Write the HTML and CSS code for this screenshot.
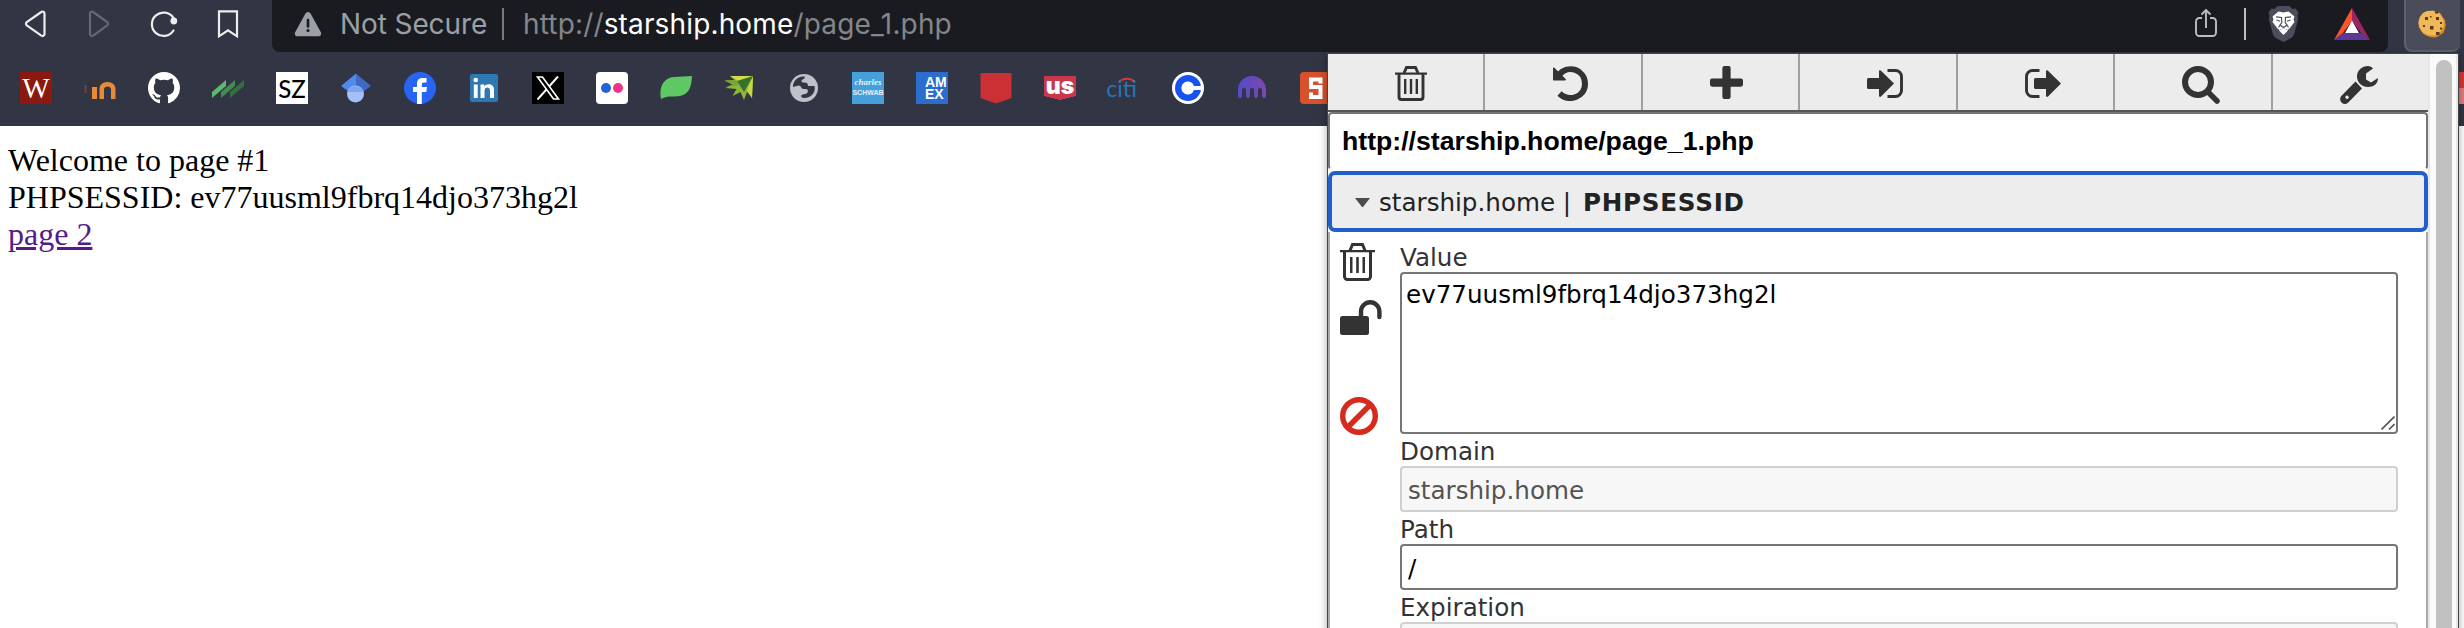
FILE: index.html
```html
<!DOCTYPE html>
<html lang="en">
<head>
<meta charset="utf-8">
<title>page_1.php</title>
<link rel="stylesheet" href="styles.css">
</head>
<body>
<div class="browser">
  <header class="navbar">
    <div class="nav-buttons">
      <svg class="nav-icon" viewBox="0 0 32 32"><path d="M24.500 5.500v20.500c0 1.800-1.900 2.600-3.200 1.500L6.800 17.400a2.100 2.100 0 0 1 0-3.300L21.300 4c1.300-1 3.200-.3 3.200 1.500Z" fill="none" stroke="#eee" stroke-width="2.200"/></svg>
      <svg class="nav-icon" viewBox="0 0 32 32"><path d="M6 5.500v20.500c0 1.800 1.900 2.600 3.200 1.500l14-10.100a2.100 2.100 0 0 0 0-3.300L9.200 4C7.900 3 6 3.700 6 5.500Z" fill="none" stroke="#666975" stroke-width="2.200"/></svg>
      <svg class="nav-icon" viewBox="0 0 32 32"><path d="M25.500 10A11.700 11.700 0 1 0 25.500 22.500" fill="none" stroke="#eee" stroke-width="2.200" stroke-linecap="round"/><circle cx="25.800" cy="13" r="3.400" fill="#eee"/></svg>
      <svg class="nav-icon" viewBox="0 0 32 32"><path d="M7 3.300h18v25l-9-6-9 6Z" fill="none" stroke="#eee" stroke-width="2.200"/></svg>
    </div>
    <div class="address">
      <svg class="warn" viewBox="0 0 28 26"><path d="M14 1c1.300 0 2 .7 2.700 1.800l10 18.200c1.300 2.300 0 4.300-2.500 4.300H3.800c-2.500 0-3.800-2-2.500-4.300l10-18.200C12 1.700 12.700 1 14 1Z" fill="#9aa0a6"/><path d="M14 9v6.500" stroke="#1a1b20" stroke-width="2.600" stroke-linecap="round"/><circle cx="14" cy="19.500" r="1.600" fill="#1a1b20"/></svg>
      <span class="security">Not Secure</span>
      <span class="rule"></span>
      <span class="url">http://<b class="host">starship.home</b>/page_1.php</span>
      <div class="address-actions">
        <svg class="share" viewBox="0 0 22 30"><path d="M7 10H4.500A3.500 3.500 0 0 0 1 13.500v11A3.500 3.500 0 0 0 4.500 28h13a3.500 3.500 0 0 0 3.500-3.500v-11A3.500 3.500 0 0 0 17.500 10H15M11 20V3M6.500 6.500 11 2l4.500 4.500" fill="none" stroke="#bdbdc1" stroke-width="1.900"/></svg>
        <span class="rule light"></span>
        <svg class="lion" viewBox="0 0 30 36"><path d="M9 0h12l3 3 3-.5 3 4-1 3 .6 4-4 14.500c-.6 2-1.600 3-3 4L15 36l-7.600-4c-1.400-1-2.400-2-3-4L.4 13.500 1 9.500 0 6.500l3-4L6 3Z" fill="#4b4d5d"/><path d="m10 5.500 5 1 5-1 6 5-1 3 1 2.500-5 6.500L19 24l-4-2-4 2-2-1.500L4 16l1-2.500-1-3Z" fill="#fff"/><path d="m10.500 24.500 4.500-2.500 4.500 2.500-4.500 4.500Z" fill="#fff"/><path d="m7.500 10.800 5.500.7.300 5-1.800 2.500 3.500 2.500 3.500-2.500-1.800-2.500.3-5 5.500-.7M8 14l3.500 1.200M22 14l-3.500 1.200M11.500 19l-1.500 2.500M18.500 19l1.500 2.500" fill="none" stroke="#4b4d5d" stroke-width="1.200"/></svg>
        <svg class="bat" viewBox="0 0 36 32"><path d="M18 0v13L9 25 0 32Z" fill="#fb542b"/><path d="M18 0v13l9 12 9 7Z" fill="#9e2363"/><path d="M0 32h36l-9-7H9Z" fill="#5f3794"/><path d="m18 12.500 7 12.500H11Z" fill="#fff"/></svg>
      </div>
    </div>
    <div class="extension">
      <svg class="cookie" viewBox="0 0 28 28"><path d="M9 1.500 15 .5l3 1.200 4 1 2.500 4L27 10l.8 5-1 4-1.500 4-4 2.500-3.300 2-5-.2-4-1.300-3.500-2L3 21 1 17.500.3 13l1-5L4 4Z" fill="#d58b2c"/><path d="m9 1 6-.2 3 1.200 3.500 1.200 2.300 4 2 4-.3 5-2.500 5-3 3-5 1.500-6-1-4.500-2.500L1.500 17 .5 12.500 2 7l3-4Z" fill="#efb859"/><path d="M7 7h3v3H7zM18 7h3v3h-3zM12 16h3.500v3.500H12zM18 22h3.500v3H18zM5 15h2v2H5zM22 12h2v2h-2zM22 17.500h2v2h-2zM12 6h1.500v1.500H12zM17 1.500h3.500v2H17z" fill="#5d3820"/></svg>
    </div>
  </header>

  <nav class="bookmarks">
    <span class="fav fav-w">W</span>
    <svg class="fav" viewBox="0 0 32 32"><path d="M8 15h5v12H8zM15.500 27V17c0-4 3-7 8-7s8 3 8 7v10H27V17.500c0-4-7-4-7 0V27Z" fill="#e78a3a"/><path d="M3 12 14 6.500l5 2.500-3 4-5 1-8-1Z" fill="#3a3330"/><path d="M1.500 13v8" stroke="#6b463e" stroke-width="2"/></svg>
    <svg class="fav" viewBox="0 0 16 16"><path fill="#fff" d="M8 0C3.580 0 0 3.580 0 8c0 3.540 2.290 6.530 5.470 7.590.4.070.55-.17.55-.38 0-.19-.01-.82-.01-1.490-2.010.37-2.530-.49-2.690-.94-.09-.23-.48-.94-.82-1.130-.28-.15-.68-.52-.01-.53.63-.01 1.080.58 1.230.82.720 1.210 1.870.87 2.330.66.070-.52.280-.87.510-1.070-1.780-.2-3.640-.89-3.640-3.950 0-.87.310-1.590.82-2.150-.08-.2-.36-1.020.08-2.120 0 0 .67-.21 2.200.82.640-.18 1.320-.27 2-.27s1.360.09 2 .27c1.530-1.040 2.200-.82 2.200-.82.440 1.100.16 1.920.08 2.120.51.560.82 1.270.82 2.150 0 3.070-1.870 3.750-3.650 3.950.29.25.54.73.54 1.480 0 1.070-.01 1.930-.01 2.200 0 .21.150.46.550.38A8.010 8.010 0 0 0 16 8c0-4.420-3.580-8-8-8Z"/></svg>
    <svg class="fav" viewBox="0 0 32 32"><path d="M0 20 14 8v6L0 26Z" fill="#5cba70"/><path d="m9 20 14-12v6L9 26Z" fill="#438b50"/><path d="M18 20 32 8v6L18 26Z" fill="#30713e"/></svg>
    <span class="fav fav-sz">SZ</span>
    <svg class="fav" viewBox="0 0 32 32"><path d="M16 1.500v17l-6 2L1 14Z" fill="#5089ef"/><path d="m16 1.500 15 12.500-9 6.500-6-2Z" fill="#3e69c4"/><circle cx="15.500" cy="22" r="8.500" fill="#a3c1f8"/><path d="M7.500 20a8.500 8.500 0 0 1 16 0Z" fill="#7ca6f5"/></svg>
    <svg class="fav" viewBox="0 0 32 32"><circle cx="16" cy="16" r="16" fill="#2865f5"/><path d="M13 32V20H9v-5h4v-3c0-4.500 2.500-6 6-6h3.500v4.500H20c-1.600 0-2.200.8-2.200 2.300V15H23l-.8 5h-4.400v12Z" fill="#fff"/></svg>
    <svg class="fav" viewBox="0 0 32 32"><rect x="2" y="2" width="28" height="28" rx="2" fill="#3078b4"/><circle cx="7.700" cy="8" r="2.300" fill="#fff"/><path d="M5.800 12.500h3.900V26H5.800zM12.500 12.500h3.700v1.900c2-3.400 9.800-3.300 9.800 3.200V26h-4v-7.200c0-4.500-5.500-4-5.500 0V26h-4Z" fill="#fff"/></svg>
    <svg class="fav" viewBox="0 0 32 32"><path d="M0 0h32v32H0z"/><path d="M26 4.500 5.500 27.500" fill="none" stroke="#fff" stroke-width="1.900"/><path d="M5.500 5h5L26.500 27h-5Z" fill="#000" stroke="#fff" stroke-width="1.600"/></svg>
    <svg class="fav" viewBox="0 0 32 32"><rect width="32" height="32" rx="4" fill="#fff"/><circle cx="10" cy="16" r="5" fill="#2162db"/><circle cx="22" cy="16" r="5" fill="#ee3482"/></svg>
    <svg class="fav" viewBox="0 0 32 32"><path d="M1 27C-1 17 2 6 14 5l18-1c-.5 9-2 18-12 20-8 1-13-.5-19 3Z" fill="#5dc864"/></svg>
    <svg class="fav" viewBox="0 0 32 32"><path d="M6 4h23l-1 22-5-6-3 8-3.500-8-8 4 4-7-11-1 7-3.500-8-4 10-.5Z" fill="#8db63a"/><path d="M6 4h23L16 10Z" fill="#d4dc4a"/><path d="m29 4-1 22-5-8Z" fill="#c9d548"/><path d="M29 4 13 9l7 11Z" fill="#35722b"/><path d="m1 9 11-1 4 5-14 2 8-3Z" fill="#78a636"/></svg>
    <svg class="fav" viewBox="0 0 32 32"><circle cx="16" cy="16" r="14" fill="#bfc1c8"/><path d="M5 15C5 9 9 5 15 4.500c3-.5 2 2-.5 3-2 1-1 3 1.500 3 3 0 4 1 4 3.500h6.500c1.500 6-3 12-10.500 12-3 0-4-3-1-3.500 3-.3 5-1.500 5-3.500s-2-2-4.500-2c-2.500 0-2-3.500-5-3.500Z" fill="#323543"/></svg>
    <span class="fav fav-charles"><span>charles</span><span class="sub">SCHWAB</span></span>
    <span class="fav fav-amex"><span>AM</span><span>EX</span></span>
    <svg class="fav" viewBox="0 0 32 32"><path d="M.5 1h31v25L16 31.500.5 26Z" fill="#cb3035"/></svg>
    <span class="fav fav-us"><span class="us-text">us</span></span>
    <span class="fav fav-citi"><svg class="arc" viewBox="0 0 32 6"><path d="M11 5.500c4-5 12-5 16 0" fill="none" stroke="#d8363a" stroke-width="2"/></svg><span class="citi-text">citi</span></span>
    <svg class="fav" viewBox="0 0 32 32"><circle cx="16" cy="16" r="16" fill="#fff"/><circle cx="16" cy="16" r="13" fill="#1552f0"/><path d="M29 14h-7a6.500 6.500 0 1 0 0 4h7Z" fill="#fff"/></svg>
    <svg class="fav" viewBox="0 0 32 32"><defs><linearGradient id="kr"><stop offset="0" stop-color="#554bc8"/><stop offset="1" stop-color="#7a48b0"/></linearGradient></defs><path d="M2 18a14 14 0 0 1 28 0v6a2 2 0 0 1-4 0v-6a2 2 0 0 0-4 0v6a2 2 0 0 1-4 0v-6a2 2 0 0 0-4 0v6a2 2 0 0 1-4 0v-6a2 2 0 0 0-4 0v6a2 2 0 0 1-4 0Z" fill="url(#kr)"/></svg>
    <svg class="fav" viewBox="0 0 32 32"><rect width="32" height="32" rx="4" fill="#d8502c"/><path d="M20.500 11.500V7.500H11v7.500h9.500v10H11V20.500" fill="none" stroke="#fff" stroke-width="4"/></svg>
  </nav>
  <span class="edge-fav"></span>

  <main class="page">
    Welcome to page #1<br>
    PHPSESSID: ev77uusml9fbrq14djo373hg2l<br>
    <a class="visited" href="#">page 2</a>
  </main>

  <section class="popup">
    <div class="popup-body">
      <div class="toolbar">
        <button class="tool"><svg class="trash" viewBox="0 0 32 35"><path d="M0 6.500h32v2.200H0z"/><path d="M9 7 11.500 1.500h9L23 7M4 8v23a2.500 2.500 0 0 0 2.500 2.500h19A2.500 2.500 0 0 0 28 31V8" fill="none" stroke="#333" stroke-width="2.900"/><path d="M9 13h2.400v15H9zM14.800 13h2.400v15h-2.400zM20.600 13H23v15h-2.400z"/></svg></button>
        <button class="tool"><svg class="w35" viewBox="0 0 35 35"><path d="M0 2.500c0-1 1-1.200 1.600-.5l11 11c.7.700.3 1.500-.6 1.500H1c-.7 0-1-.3-1-1Z"/><path d="M6 9C15-2 32 3.500 32 18c0 13-16 18.500-25.500 9.500" fill="none" stroke="#333" stroke-width="6"/></svg></button>
        <button class="tool"><svg class="plus" viewBox="0 0 32 32"><path d="M12 2a2 2 0 0 1 2-2h4a2 2 0 0 1 2 2v10h10a2 2 0 0 1 2 2v4a2 2 0 0 1-2 2H20v10a2 2 0 0 1-2 2h-4a2 2 0 0 1-2-2V20H2a2 2 0 0 1-2-2v-4a2 2 0 0 1 2-2h10Z"/></svg></button>
        <button class="tool"><svg class="sign" viewBox="0 0 36 29"><path d="M0 10.500A1.500 1.500 0 0 1 1.500 9H12V2.500C12 1 13.200.8 14 1.800l13 12.700-13 13C13.200 28.300 12 28 12 26.500V20H1.500A1.500 1.500 0 0 1 0 18.500Z"/><path d="M20.500 1.500h8a6 6 0 0 1 6 6v14a6 6 0 0 1-6 6h-8" fill="none" stroke="#333" stroke-width="2.900"/></svg></button>
        <button class="tool"><svg class="sign" viewBox="0 0 36 29"><path d="M9 10.500A1.500 1.500 0 0 1 10.500 9H21V2.500C21 1 22.200.8 23 1.800l13 12.700-13 13c-.8.800-2 .5-2-1V20H10.500A1.500 1.500 0 0 1 9 18.500Z"/><path d="M14.500 1.500h-7a6 6 0 0 0-6 6v14a6 6 0 0 0 6 6h7" fill="none" stroke="#333" stroke-width="2.900"/></svg></button>
        <button class="tool"><svg class="search" viewBox="0 0 38 38"><circle cx="16" cy="16" r="13" fill="none" stroke="#333" stroke-width="6"/><path d="m26 26 9 9" stroke="#333" stroke-width="5.500" stroke-linecap="round"/></svg></button>
        <button class="tool"><svg class="search" viewBox="0 0 38 38"><path d="M33 2.500 26 7.500v6l5 3 7-4.500C38 18 33.500 21 28 21c-6 0-11-4.500-11-10.500S22 0 28 0c2 0 4 1 5 2.500Z"/><path fill-rule="evenodd" d="m15.500 15.500 6.500 7L8.500 36.300a4.500 4.500 0 0 1-7.200-6.300ZM7 29.500a1.700 1.700 0 1 0 .1 0Z"/></svg></button>
      </div>
      <div class="page-url">http://starship.home/page_1.php</div>
      <div class="cookie-row"><span class="caret"></span><span>starship.home | <b class="cookie-name">PHPSESSID</b></span></div>
      <div class="detail">
        <div class="side">
          <svg class="side-trash" viewBox="0 0 35 38"><path d="M0 7h35v2.300H0z"/><path d="M10 7.500 12.500 1.500h10L25 7.500M4.500 8.500v25a3 3 0 0 0 3 3h20a3 3 0 0 0 3-3v-25" fill="none" stroke="#333" stroke-width="3"/><path d="M10 14h2.500v16H10zM16.200 14h2.600v16h-2.600zM22.500 14H25v16h-2.500z"/></svg>
          <svg class="side-lock" viewBox="0 0 42 35"><rect y="16" width="29" height="19" rx="2.500"/><path d="M21 17V11.500a9.200 9.200 0 0 1 18.400 0V17" fill="none" stroke="#333" stroke-width="4.400" stroke-linecap="round"/></svg>
          <svg class="side-ban" viewBox="0 0 38 38"><circle cx="19" cy="19" r="16.300" fill="none" stroke="#d52b1e" stroke-width="5.400"/><path d="M30.500 7.500 7.500 30.500" stroke="#d52b1e" stroke-width="5.400"/></svg>
        </div>
        <div class="form">
          <div class="label">Value</div>
          <div class="area">ev77uusml9fbrq14djo373hg2l<svg class="grip" viewBox="0 0 14 14"><path d="M.5 13.500 13.500.5M8 13.500 13.500 8" stroke="#555" stroke-width="1.600"/></svg></div>
          <div class="label">Domain</div>
          <div class="field disabled">starship.home</div>
          <div class="label">Path</div>
          <div class="field">/</div>
          <div class="label">Expiration</div>
          <div class="field disabled"></div>
        </div>
      </div>
    </div>
    <div class="scrollbar"><div class="thumb"></div></div>
  </section>
</div>
</body>
</html>
```
FILE: styles.css
```css
* { box-sizing: border-box; }
body { margin: 0; background: #fff; }
.browser { position: relative; width: 2464px; height: 628px; overflow: hidden; background: #fff; }

.navbar { display: flex; height: 52px; background: #323543; }
.nav-buttons { display: flex; flex: none; gap: 32px; width: 272px; padding: 8px 0 0 20px; }
.nav-icon { flex: none; width: 32px; height: 32px; }
.address { display: flex; flex: none; width: 2116px; padding: 8px 18px 0 22px; background: #1a1b20; border-radius: 0 0 8px 8px; font-family: Inter, sans-serif; font-size: 28px; line-height: 32px; color: #85868b; }
.warn { flex: none; width: 28px; height: 26px; margin-top: 3px; }
.security { flex: none; width: 162px; margin-left: 18px; color: #9aa0a6; white-space: nowrap; letter-spacing: -.1px; }
.rule { flex: none; width: 2px; height: 32px; background: #77787d; }
.rule.light { background: #bdbdc1; }
.url { margin-left: 19px; white-space: nowrap; letter-spacing: .15px; }
.host { color: #fff; font-weight: 400; }
.address-actions { display: flex; margin-left: auto; }
.share { width: 22px; height: 30px; margin-right: 27px; }
.lion { width: 31px; height: 36px; margin: -2px 35px 0 22px; }
.bat { width: 36px; height: 32px; }
.extension { display: flex; flex: none; justify-content: center; width: 56px; height: 52px; margin-left: 16px; padding: 10px 2px 0 0; background: #4a4c59; border: solid #60626d; border-width: 0 0 2px 2px; border-radius: 0 0 8px 8px; }
.cookie { width: 28px; height: 28px; }

.bookmarks { display: flex; gap: 32px; height: 74px; padding: 20px 20px 0; background: #323543; }
.fav { flex: none; display: block; width: 32px; height: 32px; text-align: center; }
.fav-w { background: #8c1910; color: #fff; font: 29px/32px "Liberation Serif", serif; }
.fav-sz { background: #fff; color: #000; font: 500 24px/34px Lato, sans-serif; }
.fav-charles { padding-top: 5px; background: #459fda; color: #e3f2fb; font: italic bold 9px/11px "Liberation Serif", serif; }
.fav-charles span { display: block; }
.fav-charles .sub { font: bold 7px/10px "Liberation Sans", sans-serif; }
.fav-amex { padding: 4px 0 0 9px; background: #2a6dcc; color: #fff; font: bold 14px/12px "Liberation Sans", sans-serif; text-align: left; }
.fav-amex span { display: block; }
.fav-us { height: 28px; background: linear-gradient(#c8374a, #c8374a) 0 4px / 100% 20px no-repeat, linear-gradient(to bottom left, #c8374a 50%, transparent 51%) 0 24px / 50% 4px no-repeat, linear-gradient(to bottom right, #c8374a 50%, transparent 51%) 100% 24px / 50% 4px no-repeat; }
.us-text { display: block; color: #fff; font: 900 23px/28px Inter, sans-serif; }
.fav-citi { padding-top: 5px; color: #2b74b5; font: 23px/18px Lato, sans-serif; }
.arc { display: block; width: 32px; height: 6px; }
.citi-text { display: block; margin-left: -5px; margin-top: -4px; }
.edge-fav { position: absolute; left: 2459px; top: 72px; width: 5px; height: 32px; background: linear-gradient(#dd3535 50%, #e07a80 50%); }

.page { padding: 16px 8px; font: 32px/37px "Liberation Serif", serif; color: #000; }
.visited { color: #551a8b; }

.popup { position: absolute; left: 1327px; top: 53px; display: flex; width: 1132px; height: 590px; border: 1px solid #444; background: #fff; box-shadow: 0 2px 8px rgba(0, 0, 0, .35); font: 24.6px/32px "DejaVu Sans", sans-serif; color: #333; }
.popup-body { display: flex; flex: none; flex-direction: column; width: 1100px; }
.toolbar { display: flex; flex: none; height: 58px; background: #ececec; border-bottom: 2px solid #555; }
.tool { display: flex; flex: 1; justify-content: center; align-items: flex-start; padding: 12px 0 0; border: 0; border-right: 2px solid #a0a0a0; background: none; fill: #333; }
.tool:last-child { border-right: 0; }
.trash { width: 32px; height: 35px; margin-left: 11px; }
.w35 { width: 35px; height: 35px; margin-left: 14px; }
.plus { width: 33px; height: 33px; margin-left: 12px; }
.sign { width: 36px; height: 29px; margin: 3px 0 0 15px; }
.search { width: 38px; height: 38px; margin-left: 17px; }
.page-url { flex: none; height: 58px; padding: 9px 14px 0 12px; border: 2px solid #767676; border-bottom-color: transparent; border-radius: 4px; color: #000; font: bold 26.667px/36px "Liberation Sans", sans-serif; }
.cookie-row { display: flex; flex: none; align-items: center; height: 61px; margin-top: 1px; padding: 2px 0 0 23px; border: 4px solid #2160c8; border-radius: 7px; background: #ededed; color: #222; }
.cookie-name { margin-left: 4px; letter-spacing: .75px; }
.caret { width: 15px; margin-right: 9px; border: solid transparent; border-width: 9px 7.500px 0; border-top-color: #4c4c4c; }
.detail { display: flex; flex: 1; border: solid #aaa; border-width: 0 2px; fill: #333; }
.side { flex: none; width: 70px; padding: 11px 0 0 10px; }
.side svg { display: block; }
.side-trash { width: 35px; height: 38px; }
.side-lock { width: 42px; height: 35px; margin-top: 19px; }
.side-ban { width: 38px; height: 38px; margin-top: 62px; }
.form { flex: none; width: 998px; padding-top: 8px; }
.label { height: 32px; padding-top: 2px; }
.area, .field { position: relative; border: 2px solid #767676; border-radius: 4px; background: #fff; color: #000; }
.area { height: 162px; padding: 5px 4px; }
.field { height: 46px; padding: 7px 6px 0; }
.disabled { border-color: #d0d0d0; background: #f7f7f7; color: #545454; }
.grip { position: absolute; right: 1px; bottom: 2px; width: 14px; height: 14px; }
.scrollbar { flex: none; width: 30px; padding: 6px 4px 0 6px; border: 2px solid #e8e8e8; border-width: 0 2px; background: #fafafa; }
.thumb { width: 16px; height: 600px; border-radius: 8px; background: #c1c1c1; }
```
